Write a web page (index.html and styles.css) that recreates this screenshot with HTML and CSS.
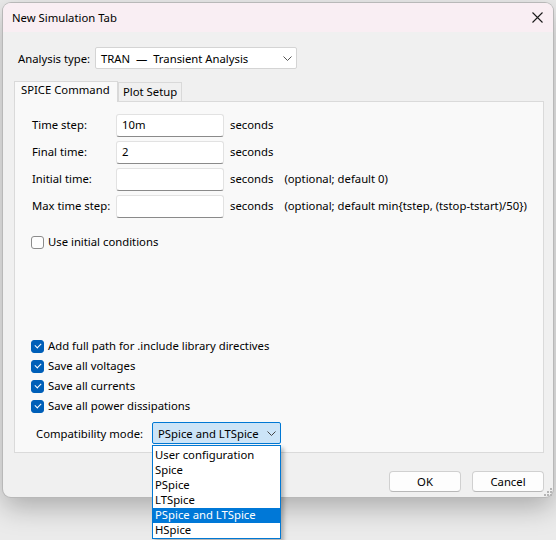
FILE: index.html
```html
<!DOCTYPE html>
<html lang="en">
<head>
  <meta charset="UTF-8" />
  <title>New Simulation Tab</title>
  <link rel="stylesheet" href="styles.css">
</head>
<body>
  <div class="dialog">
    <div class="titlebar">
      <span class="title">New Simulation Tab</span>
      <svg class="close" width="11" height="11" viewBox="0 0 11 11">
        <path d="M0.5 0.5 L10.5 10.5 M10.5 0.5 L0.5 10.5" stroke="#1a1a1a" stroke-width="1.1" fill="none"/>
      </svg>
    </div>
    <div class="content">
      <div class="analysis-row">
        <label>Analysis type:</label>
        <div class="select analysis-select">
          <span>TRAN &nbsp;—&nbsp; Transient Analysis</span>
          <svg class="chevron" width="9" height="5" viewBox="0 0 9 5"><path d="M0.5 0.5 L4.5 4.5 L8.5 0.5" stroke="#555" fill="none"/></svg>
        </div>
      </div>

      <div class="tabs">
        <div class="tab active">SPICE Command</div>
        <div class="tab">Plot Setup</div>
      </div>
      <div class="panel">
        <div class="form-row">
          <label>Time step:</label>
          <div class="input">10m</div>
          <span class="unit">seconds</span>
        </div>
        <div class="form-row">
          <label>Final time:</label>
          <div class="input">2</div>
          <span class="unit">seconds</span>
        </div>
        <div class="form-row">
          <label>Initial time:</label>
          <div class="input"></div>
          <span class="unit">seconds</span>
          <span class="hint">(optional; default 0)</span>
        </div>
        <div class="form-row">
          <label>Max time step:</label>
          <div class="input"></div>
          <span class="unit">seconds</span>
          <span class="hint">(optional; default min{tstep, (tstop-tstart)/50})</span>
        </div>

        <div class="check initial">
          <span class="box"></span>Use initial conditions
        </div>

        <div class="bottom-group">
          <div class="check"><span class="box checked"></span>Add full path for .include library directives</div>
          <div class="check"><span class="box checked"></span>Save all voltages</div>
          <div class="check"><span class="box checked"></span>Save all currents</div>
          <div class="check"><span class="box checked"></span>Save all power dissipations</div>

          <div class="compat-row">
            <label>Compatibility mode:</label>
            <div class="select compat-select">
              <span>PSpice and LTSpice</span>
              <svg class="chevron" width="9" height="5" viewBox="0 0 9 5"><path d="M0.5 0.5 L4.5 4.5 L8.5 0.5" stroke="#444" fill="none"/></svg>
              <ul class="dropdown">
                <li>User configuration</li>
                <li>Spice</li>
                <li>PSpice</li>
                <li>LTSpice</li>
                <li class="selected">PSpice and LTSpice</li>
                <li>HSpice</li>
              </ul>
            </div>
          </div>
        </div>
      </div>

      <div class="buttons">
        <button>OK</button>
        <button>Cancel</button>
      </div>
    </div>
    <svg class="grip" width="9" height="9" viewBox="0 0 9 9">
      <rect x="7" y="1" width="2" height="2" fill="#b5b5b5"/>
      <rect x="4" y="4" width="2" height="2" fill="#b5b5b5"/>
      <rect x="7" y="4" width="2" height="2" fill="#b5b5b5"/>
      <rect x="1" y="7" width="2" height="2" fill="#b5b5b5"/>
      <rect x="4" y="7" width="2" height="2" fill="#b5b5b5"/>
      <rect x="7" y="7" width="2" height="2" fill="#b5b5b5"/>
    </svg>
  </div>
</body>
</html>
```

FILE: styles.css
```css
body {
  margin: 0;
  background: #ebebeb;
  font-family: 'Noto Sans', sans-serif;
  font-size: 11.3px;
  color: #000;
  height: 540px;
  overflow: hidden;
  white-space: nowrap;
}
.dialog {
  position: relative;
  margin: 3px 0 0 3px;
  width: 550px;
  height: 494px;
  background: #f0f0f0;
  border-radius: 8px;
  box-shadow: 0 0 0 1px #b8b8b8, 0 10px 28px rgba(0, 0, 0, 0.28);
  box-sizing: border-box;
}
.titlebar {
  height: 29px;
  display: flex;
  align-items: center;
  justify-content: space-between;
  padding: 0 8px 0 9px;
  background: #f9eef3;
  border-radius: 8px 8px 0 0;
}
.close {
  margin-right: 2px;
}
.content {
  padding: 15px 9px 0 11px;
}
.analysis-row {
  display: flex;
  align-items: center;
  padding-left: 4px;
}
.analysis-row label {
  width: 77px;
}
.select {
  position: relative;
  height: 22px;
  box-sizing: border-box;
  display: flex;
  align-items: center;
  justify-content: space-between;
  background: #fff;
  border: 1px solid #d4d4d4;
  border-radius: 2px;
  padding: 0 4px 0 5px;
}
.analysis-select {
  width: 202px;
}
.tabs {
  display: flex;
  align-items: flex-end;
  margin-top: 11px;
  height: 21px;
}
.tab {
  height: 19px;
  box-sizing: border-box;
  padding: 1px 4px 0;
  border: 1px solid #d9d9d9;
  border-bottom: none;
  background: #f0f0f0;
}
.tab.active {
  height: 21px;
  width: 104px;
  padding: 0 6px;
  background: #f9f9f9;
  position: relative;
  top: 1px;
  z-index: 1;
}
.panel {
  height: 352px;
  box-sizing: border-box;
  border: 1px solid #dadada;
  background: #f9f9f9;
  padding: 12px 0 8px 17px;
  display: flex;
  flex-direction: column;
}
.form-row {
  display: flex;
  align-items: center;
  height: 23px;
  margin-bottom: 4px;
}
.form-row label,
.form-row .unit,
.form-row .hint {
  position: relative;
  top: -1px;
}
.form-row label {
  width: 84px;
}
.input {
  width: 108px;
  height: 23px;
  box-sizing: border-box;
  background: #fff;
  border: 1px solid #e2e2e2;
  border-bottom-color: #8a8a8a;
  border-radius: 3px;
  padding: 2px 0 0 5px;
}
.unit {
  margin-left: 6px;
}
.hint {
  margin-left: 11px;
}
.check {
  display: flex;
  align-items: center;
  height: 20px;
  margin-left: -1px;
}
.check.initial {
  margin-top: 9px;
}
.box {
  width: 13px;
  height: 13px;
  box-sizing: border-box;
  border: 1px solid #8b8b8b;
  border-radius: 3px;
  background: #fdfdfd;
  margin-right: 4px;
  position: relative;
  top: 1px;
}
.box.checked {
  background: #005fb8;
  border-color: #005fb8;
}
.box.checked::after {
  content: '';
  position: absolute;
  left: 3px;
  top: 2px;
  width: 5px;
  height: 3px;
  border-left: 1px solid #fff;
  border-bottom: 1px solid #fff;
  transform: rotate(-45deg);
}
.bottom-group {
  margin-top: auto;
}
.compat-row {
  display: flex;
  align-items: center;
  margin-top: 7px;
  padding-left: 4px;
}
.compat-row label {
  width: 116px;
}
.compat-select {
  width: 129px;
  background: #cce4f7;
  border-color: #0078d4;
}
.dropdown {
  position: absolute;
  left: -1px;
  top: 22px;
  width: 129px;
  margin: 0;
  padding: 2px 0 0;
  list-style: none;
  background: #fff;
  border: 1px solid #0078d4;
  box-sizing: border-box;
  box-shadow: 3px 3px 4px rgba(0, 0, 0, 0.25);
  z-index: 5;
}
.dropdown li {
  height: 15px;
  line-height: 14px;
  padding-left: 2px;
}
.dropdown li.selected {
  background: #0078d7;
  color: #fff;
}
.buttons {
  display: flex;
  justify-content: flex-end;
  gap: 11px;
  margin-top: 18px;
}
button {
  width: 72px;
  height: 21px;
  font-family: inherit;
  font-size: 11.3px;
  color: #000;
  background: #fdfdfd;
  border: 1px solid #d0d0d0;
  border-bottom-color: #b8b8b8;
  border-radius: 4px;
  padding: 0;
}
.grip {
  position: absolute;
  right: 1px;
  bottom: 1px;
}
```
